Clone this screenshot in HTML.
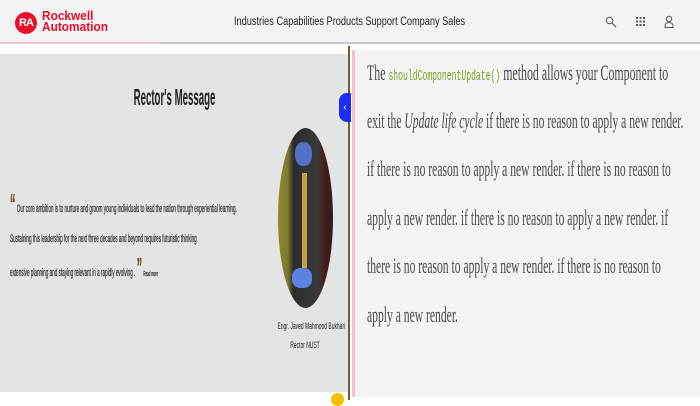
<!DOCTYPE html>
<html><head><meta charset="utf-8"><style>
*{margin:0;padding:0;box-sizing:border-box}
body{width:700px;height:400px;overflow:hidden;background:#fff;font-family:"Liberation Sans",sans-serif;position:relative}
.hdr{position:absolute;left:0;top:0;width:700px;height:44px;background:#f3f3f5;border-bottom:2px solid #c9c9cc}
.hdr .pk{position:absolute;left:0;top:42px;width:160px;height:2px;background:#f0c6cc}
.logo{position:absolute;left:15px;top:12px;width:22px;height:22px;border-radius:50%;background:#e5112c;color:#fff;font:bold 11px "Liberation Sans";text-align:center;line-height:22px;letter-spacing:-1px}
.lt{position:absolute;left:42px;top:11px;color:#e5112c;font:bold 12.5px/11px "Liberation Sans";transform:scaleX(.95);transform-origin:left}
.nav{position:absolute;left:234px;top:16px;font-size:11.5px;color:#222;transform:scaleX(.8);transform-origin:left;white-space:nowrap}
.left{position:absolute;left:0;top:54px;width:349px;height:338px;background:#e3e4e4}
h1{position:absolute;left:0;width:349px;top:84px;text-align:center;font:bold 23px "Liberation Sans";color:#222;transform:scaleX(.42)}
.q{position:absolute;left:10px;white-space:nowrap;font-size:11px;color:#333;transform:scaleX(.42);transform-origin:left;-webkit-text-stroke:.3px #333}
.ph{position:absolute;left:278px;top:128px;width:55px;height:180px;border-radius:50%;background:linear-gradient(90deg,#8d8a2a 0,#7b7a30 18%,#2b2b2b 28%,#3a3a3a 72%,#4a1c1c 85%,#222 100%);overflow:hidden}
.ph .f{position:absolute;left:17px;top:14px;width:17px;height:24px;border-radius:45%;background:#5670c8}
.ph .t{position:absolute;left:24px;top:45px;width:5px;height:95px;background:#c2a03a}
.ph .h{position:absolute;left:14px;top:140px;width:20px;height:20px;border-radius:40%;background:#5e82e0}
.nm{position:absolute;left:255px;width:100px;text-align:center;font-size:9px;color:#222;transform:scaleX(.55);white-space:nowrap}
.div{position:absolute;left:348px;top:46px;width:2px;height:354px;background:#7a5a2a}
.btn{position:absolute;left:339px;top:93px;width:12px;height:29px;border-radius:8px 0 0 8px;background:#1d2cf5;color:#fff;font-size:10px;line-height:29px;text-align:center}
.right{position:absolute;left:352px;top:50px;width:348px;height:347px;background:#f4f4f4;border-left:3px solid #f7bfd3}
.r{position:absolute;left:367px;white-space:nowrap;font:22px "Liberation Serif",serif;color:#4a4a4a;transform:scaleX(.528);transform-origin:left}
code{font:15px "Liberation Mono",monospace;color:#7aa022}
.y{position:absolute;left:331px;top:393px;width:13px;height:13px;border-radius:50%;background:#f5c000}
</style></head><body>
<div class="hdr"><div class="pk"></div></div>
<div class="logo">RA</div>
<div class="lt">Rockwell<br>Automation</div>
<div class="nav">Industries Capabilities Products Support Company Sales</div>
<svg style="position:absolute;left:605px;top:16px" width="12" height="12" viewBox="0 0 12 12"><circle cx="4.5" cy="4.5" r="3.3" fill="none" stroke="#555" stroke-width="1"/><path d="M7 7l4 4" stroke="#555" stroke-width="1.2"/></svg>
<svg style="position:absolute;left:636px;top:17px" width="9" height="9" viewBox="0 0 9 9" fill="#555"><rect x="0" y="0" width="2" height="2"/><rect x="3.5" y="0" width="2" height="2"/><rect x="7" y="0" width="2" height="2"/><rect x="0" y="3.5" width="2" height="2"/><rect x="3.5" y="3.5" width="2" height="2"/><rect x="7" y="3.5" width="2" height="2"/><rect x="0" y="7" width="2" height="2"/><rect x="3.5" y="7" width="2" height="2"/><rect x="7" y="7" width="2" height="2"/></svg>
<svg style="position:absolute;left:664px;top:15px" width="10" height="13" viewBox="0 0 10 13"><circle cx="5" cy="4" r="2.7" fill="none" stroke="#555"/><path d="M1 12.5v-2a4 3 0 0 1 8 0v2z" fill="none" stroke="#555"/></svg>
<div class="left"></div>
<h1>Rector's Message</h1>
<div class="q" style="top:198px"><b style="color:#7a5a10;font-size:26px;line-height:10px">“</b> Our core ambition is to nurture and groom young individuals to lead the nation through experiential learning.</div>
<div class="q" style="top:233px">Sustaining this leadership for the next three decades and beyond requires futuristic thinking</div>
<div class="q" style="top:262px">extensive planning and staying relevant in a rapidly evolving . <b style="color:#7a5a10;font-size:26px;line-height:10px">”</b> <span style="font-size:7px">Read more</span></div>
<div class="ph"><div class="f"></div><div class="t"></div><div class="h"></div></div>
<div class="nm" style="top:321px">Engr. Javed Mahmood Bukhari</div>
<div class="nm" style="top:340px">Rector NUST</div>
<div class="div"></div>
<div class="btn">‹</div>
<div class="y"></div>
<div class="right"></div>
<div class="r" style="top:60px;transform:scaleX(.54)">The <code>shouldComponentUpdate()</code> method allows your Component to</div>
<div class="r" style="top:108px">exit the <i>Update life cycle</i> if there is no reason to apply a new render.</div>
<div class="r" style="top:156px">if there is no reason to apply a new render. if there is no reason to</div>
<div class="r" style="top:205px">apply a new render. if there is no reason to apply a new render. if</div>
<div class="r" style="top:253px">there is no reason to apply a new render. if there is no reason to</div>
<div class="r" style="top:302px">apply a new render.</div>
</body></html>
